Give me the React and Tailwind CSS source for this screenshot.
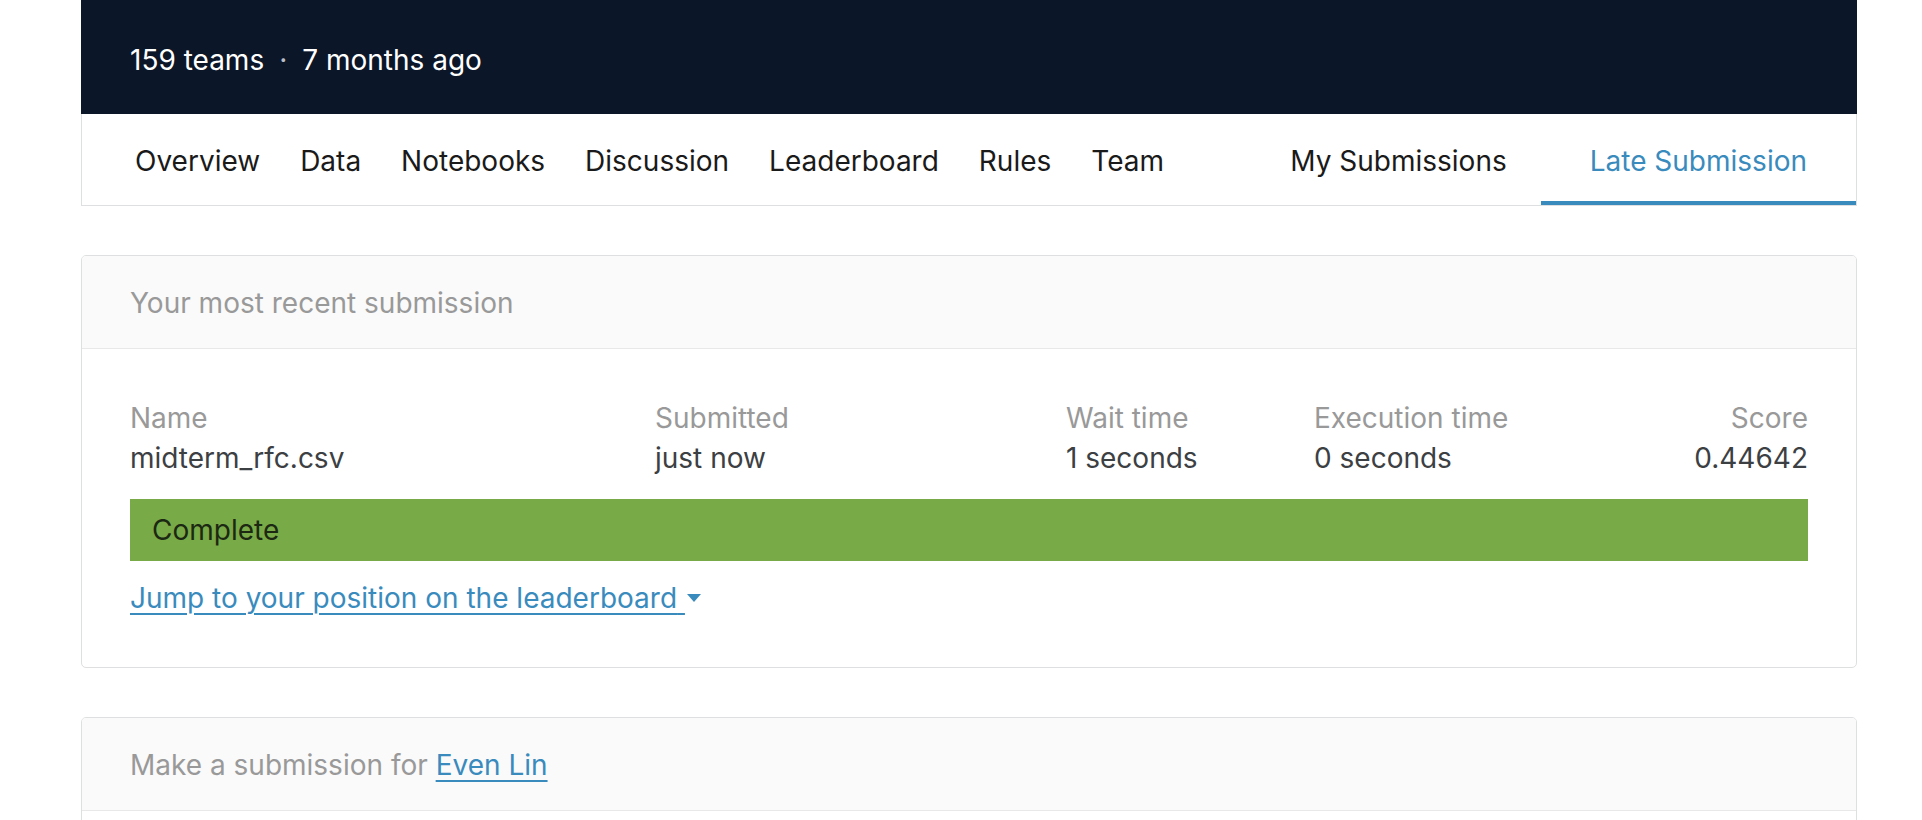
import React from 'react';

// ─── Competition header + tabs ────────────────────────────────────────────────
const LEFT_TABS = ['Overview', 'Data', 'Notebooks', 'Discussion', 'Leaderboard', 'Rules', 'Team'];

function CompetitionHeader() {
  return (
    <div className="h-[114px] bg-[#0b1628] flex items-center pl-[49px] pt-[6px] text-white text-[28px]">
      <span>159 teams</span>
      <span className="mx-[15px] text-[#b8bec8]">·</span>
      <span>7 months ago</span>
    </div>
  );
}

function TabBar() {
  return (
    <div className="h-[92px] bg-white border-x border-b border-[#dedfe0] flex items-stretch justify-between text-[28px] text-[#1a1a1a]">
      <div className="flex items-center gap-[40px] pl-[53px] pt-[2px]">
        {LEFT_TABS.map((t) => (
          <span key={t}>{t}</span>
        ))}
      </div>
      <div className="flex items-stretch">
        <span className="flex items-center mr-[34px] pt-[2px]">My Submissions</span>
        <span className="flex items-center px-[49px] pt-[6px] text-[#3a8bbd] border-b-4 border-[#3a8bbd]">
          Late Submission
        </span>
      </div>
    </div>
  );
}

// ─── Cards ────────────────────────────────────────────────────────────────────
function Card({ title, children }) {
  return (
    <div className="border border-[#dedfe0] rounded-[5px] bg-white overflow-hidden">
      <div className="h-[93px] bg-[#fafafa] border-b border-[#e8e8e8] flex items-center pl-[48px] pt-[2px] text-[28px] text-[#999999]">
        {title}
      </div>
      {children}
    </div>
  );
}

function Caret() {
  return (
    <svg width="14" height="8" viewBox="0 0 14 8" className="inline-block ml-[2px] mb-[5px]">
      <path d="M0 0 L14 0 L7 8 Z" fill="#3a8bbd" />
    </svg>
  );
}

function RecentSubmission() {
  return (
    <Card title="Your most recent submission">
      <div className="px-[48px] pt-[49px] pb-[49px] text-[28px]">
        <div className="grid grid-cols-[525px_411px_248px_1fr] leading-[40px]">
          <span className="text-[#999999]">Name</span>
          <span className="text-[#999999]">Submitted</span>
          <span className="text-[#999999]">Wait time</span>
          <span className="text-[#999999] flex justify-between">
            <span>Execution time</span>
            <span>Score</span>
          </span>
          <span className="text-[#3c4043]">midterm_rfc.csv</span>
          <span className="text-[#3c4043]">just now</span>
          <span className="text-[#3c4043]">1 seconds</span>
          <span className="text-[#3c4043] flex justify-between">
            <span>0 seconds</span>
            <span>0.44642</span>
          </span>
        </div>
        <div className="mt-[21px] h-[62px] bg-[#79aa48] flex items-center pl-[22px] text-[#1c2812]">
          Complete
        </div>
        <div className="mt-[17px] leading-[40px] text-[#3a8bbd]">
          <a className="underline underline-offset-[5px] decoration-[2px]">
            Jump to your position on the leaderboard{' '}
          </a>
          <Caret />
        </div>
      </div>
    </Card>
  );
}

function MakeSubmission() {
  return (
    <Card
      title={
        <span>
          Make a submission for{' '}
          <a className="text-[#3a8bbd] underline underline-offset-[5px] decoration-[2px]">Even Lin</a>
        </span>
      }
    >
      <div className="h-[60px]" />
    </Card>
  );
}

export default function App() {
  return (
    <div
      className="w-[1922px] h-[820px] overflow-hidden bg-white"
      style={{ fontFamily: 'Inter, "Noto Sans", sans-serif' }}
    >
      <div className="ml-[81px] w-[1776px]">
        <CompetitionHeader />
        <TabBar />
        <div className="mt-[49px] flex flex-col gap-[49px]">
          <RecentSubmission />
          <MakeSubmission />
        </div>
      </div>
    </div>
  );
}
